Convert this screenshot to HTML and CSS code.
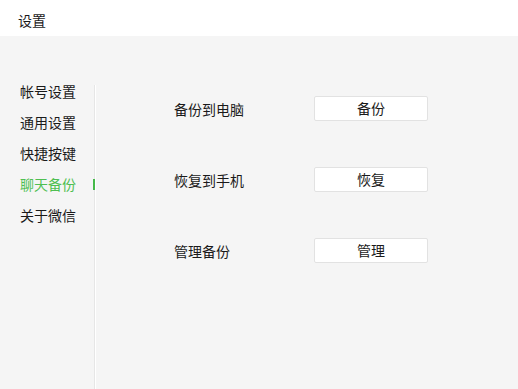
FILE: index.html
```html
<!DOCTYPE html>
<html lang="zh-CN">
<head>
<meta charset="utf-8">
<title>设置</title>
<link rel="stylesheet" href="styles.css">
</head>
<body>
<div class="window">
  <header class="titlebar">设置</header>
  <div class="main">
    <nav class="sidebar">
      <div class="nav-item">帐号设置</div>
      <div class="nav-item">通用设置</div>
      <div class="nav-item">快捷按键</div>
      <div class="nav-item active">聊天备份</div>
      <div class="nav-item">关于微信</div>
    </nav>
    <div class="divider"></div>
    <section class="content">
      <div class="row"><span class="label">备份到电脑</span><button class="btn">备份</button></div>
      <div class="row"><span class="label">恢复到手机</span><button class="btn">恢复</button></div>
      <div class="row"><span class="label">管理备份</span><button class="btn">管理</button></div>
    </section>
  </div>
</div>
</body>
</html>
```
FILE: styles.css
```css
html, body {
  margin: 0;
  padding: 0;
  height: 100%;
}
body {
  background: #f5f5f5;
  font-family: "Noto Sans CJK SC", "Noto Sans", sans-serif;
  font-size: 14px;
  color: #1a1a1a;
}
.window {
  display: flex;
  flex-direction: column;
  height: 100%;
}
.titlebar {
  height: 36px;
  box-sizing: border-box;
  background: #ffffff;
  padding: 10px 0 0 18px;
  line-height: 20px;
}
.main {
  flex: 1;
  display: flex;
}
.sidebar {
  width: 94px;
  box-sizing: border-box;
  padding: 40px 0 0 20px;
}
.nav-item {
  position: relative;
  line-height: 31px;
  height: 31px;
}
.nav-item.active {
  color: #4fbf52;
}
.nav-item.active::after {
  content: "";
  position: absolute;
  right: -1px;
  top: 10px;
  width: 2px;
  height: 11px;
  background: #46b94a;
}
.divider {
  width: 1px;
  margin-top: 49px;
  background: #e6e6e6;
  border-right: 1px solid #ffffff;
}
.content {
  padding: 60px 0 0 78px;
  display: flex;
  flex-direction: column;
  gap: 46px;
}
.row {
  display: flex;
  align-items: center;
  height: 25px;
}
.label {
  width: 140px;
}
.btn {
  width: 114px;
  height: 25px;
  box-sizing: border-box;
  background: #ffffff;
  border: 1px solid #e2e2e2;
  border-radius: 2px;
  font-family: inherit;
  font-size: 14px;
  color: #1a1a1a;
  padding: 0;
  line-height: 23px;
}
```
